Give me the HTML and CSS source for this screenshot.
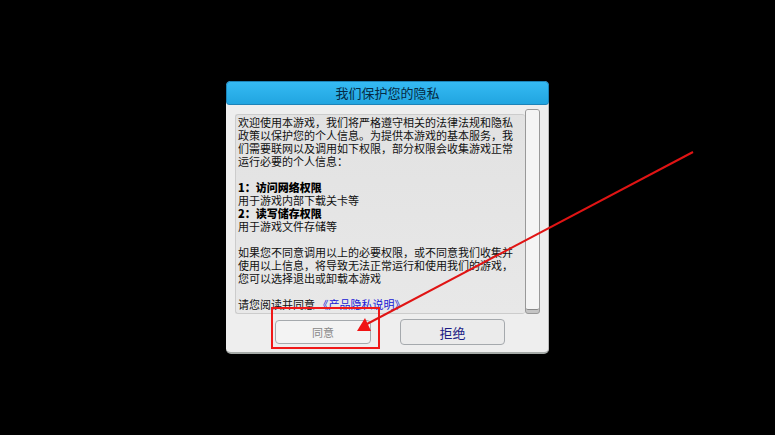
FILE: index.html
```html
<!DOCTYPE html>
<html lang="zh-CN">
	<head>
		<meta charset="utf-8">
		<meta name="viewport" content="width=device-width, initial-scale=1">
		<title>我们保护您的隐私</title>
		<link rel="stylesheet" href="styles.css">
	</head>
	<body>
	<main class="dialog">
		<h1 class="title">我们保护您的隐私</h1>
		<div class="content">
			<div class="text">
				<p>欢迎使用本游戏，我们将严格遵守相关的法律法规和隐私政策以保护您的个人信息。为提供本游戏的基本服务，我们需要联网以及调用如下权限，部分权限会收集游戏正常运行必要的个人信息：</p>
				<dl>
					<dt>1：访问网络权限</dt>
					<dd>用于游戏内部下载关卡等</dd>
					<dt>2：读写储存权限</dt>
					<dd>用于游戏文件存储等</dd>
				</dl>
				<p>如果您不同意调用以上的必要权限，或不同意我们收集并使用以上信息，将导致无法正常运行和使用我们的游戏，您可以选择退出或卸载本游戏</p>
				<p>请您阅读并同意 <a href="#">《产品隐私说明》</a></p>
			</div>
			<div class="scroll"><span class="thumb"></span></div>
		</div>
		<div class="btns">
			<button type="button" class="agree">同意</button>
			<button type="button" class="refuse">拒绝</button>
		</div>
		<!-- 指向同意按钮的红框和箭头 -->
		<svg class="mark" width="470" height="273" viewBox="0 0 470 273" aria-hidden="true">
			<rect x="46" y="227" width="107" height="40" fill="none" stroke="#f01818" stroke-width="2"/>
			<path d="M467 71L141 243" fill="none" stroke="#e01414" stroke-width="2"/>
			<path d="M131 250L139 237L145 250Z" fill="#f01414"/>
		</svg>
	</main>
	</body>
</html>
```
FILE: styles.css
```css
* {margin: 0;padding: 0;box-sizing: border-box;}
body {
	min-height: 100vh;
	display: flex;
	align-items: center;
	justify-content: center;
	overflow: hidden;
	background: #000;
	color: #111;
	font-family: "Noto Sans CJK SC", sans-serif;
}
.dialog {
	position: relative;
	width: 100%;
	max-width: 323px;
	padding-bottom: 7px;
	background: #eee;
	border-radius: 5px;
	border-bottom: 2px solid #a5aaa7;
	border-right: 1px solid #bbb;
}
.title {
	height: 24px;
	line-height: 21px;
	margin-right: -1px;
	border: 1px solid #1d83b8;
	border-radius: 4px 4px 3px 3px;
	background: linear-gradient(#35baf3, #21a5e0);
	text-align: center;
	font-size: 13px;
	font-weight: normal;
	color: #052a43;
}
.content {
	display: flex;
	padding: 4px 8px 0 9px;
}
.text {
	flex: 1;
	margin-top: 5px;
	padding: 1px 6px 2px 2px;
	border: 1px solid #ccc;
	border-right: 0;
	border-radius: 3px;
	background: linear-gradient(#e2e2e2, #e8e8e8);
	font-size: 11px;
	line-height: 13px;
}
.text p, .text dl {
	margin-bottom: 13px;
}
.text p:last-child {
	margin-bottom: 0;
}
.text dt {
	font-weight: 900;
	color: #000;
}
.text a {
	color: #1717d5;
	text-decoration: none;
}
.scroll {
	width: 15px;
	display: flex;
	border: 1px solid #999;
	border-radius: 3px;
	background: #c4c4c4;
	padding-bottom: 3px;
}
.thumb {
	flex: 1;
	border-bottom: 1px solid #888;
	border-radius: 2px;
	background: #f4f4f4;
}
.btns {
	display: flex;
	align-items: center;
	gap: 29px;
	padding: 5px 43px 0 49px;
}
.btns button {
	flex: 96;
	height: 24px;
	border: 1px solid #a5a9ad;
	border-radius: 4px;
	background: #f3f3f3;
	font-family: inherit;
	font-size: 11px;
	color: #888;
}
.btns .refuse {
	flex: 105;
	height: 26px;
	background: #ebebeb;
	font-size: 13px;
	color: #1c1c84;
}
.mark {
	position: absolute;
	left: 0;
	top: 0;
	pointer-events: none;
}
```
